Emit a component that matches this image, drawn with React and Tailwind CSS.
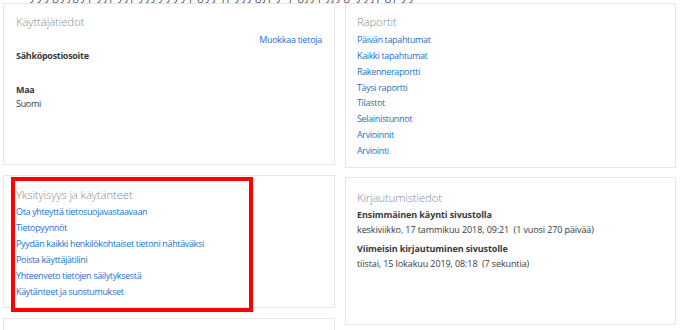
import React from "react";

const font = { fontFamily: '"Open Sans", "Noto Sans", sans-serif' };

function Card({ children, className = "" }) {
  return (
    <div className={"relative border border-[#e6e6e6] bg-white " + className}>
      {children}
    </div>
  );
}

function Heading({ children }) {
  return (
    <div className="text-[11.3px] leading-[16px] text-[#8a8a8a] font-light tracking-[-0.1px]">{children}</div>
  );
}

function A({ children }) {
  return <div className="text-[#1a73c9] tracking-[-0.35px]">{children}</div>;
}

export default function App() {
  const reports = [
    "Päivän tapahtumat",
    "Kaikki tapahtumat",
    "Rakenneraportti",
    "Täysi raportti",
    "Tilastot",
    "Selainistunnot",
    "Arvioinnit",
    "Arviointi",
  ];
  const privacy = [
    "Ota yhteyttä tietosuojavastaavaan",
    "Tietopyynnöt",
    "Pyydän kaikki henkilökohtaiset tietoni nähtäväksi",
    "Poista käyttäjätilini",
    "Yhteenveto tietojen säilytyksestä",
    "Käytänteet ja suostumukset",
  ];
  return (
    <div className="w-[688px] h-[330px] overflow-hidden bg-white text-[9px] tracking-[-0.3px] text-[#373a3c]" style={font}>
      <div className="h-[3px] overflow-hidden pl-[30px]">
        <div className="-mt-[10px] leading-[12px] text-[11px] text-[#555] whitespace-nowrap tracking-[2px]">
          yyygyjgypyjpyjpyjyyyyypgyjqpyjygjpy pgjypjjyg yyjpgpyy
        </div>
      </div>
      <div className="flex pl-[3px] gap-[10px]">
        <div className="w-[332px] flex flex-col gap-[10px]">
          <Card className="h-[162px] pt-[10px] px-[12px]">
            <Heading>Käyttäjätiedot</Heading>
            <div className="mt-[2px] leading-[16px] text-right">
              <span className="text-[#1a73c9]">Muokkaa tietoja</span>
            </div>
            <div className="leading-[16px] font-bold">Sähköpostiosoite</div>
            <div className="mt-[18px] leading-[16px] font-bold">Maa</div>
            <div className="-mt-[2px] leading-[16px]">Suomi</div>
          </Card>
          <Card className="h-[133px] pt-[11px] px-[12px]">
            <Heading>Yksityisyys ja käytänteet</Heading>
            <div className="mt-[1px] leading-[16px]">
              {privacy.map((p) => (
                <A key={p}>{p}</A>
              ))}
            </div>
            <div className="absolute left-[7px] top-[1px] w-[242px] h-[135px] border-[4px] border-[#ff0000]" />
          </Card>
          <Card className="h-[60px]" />
        </div>
        <div className="w-[331px] flex flex-col gap-[9px]">
          <Card className="h-[165px] pt-[10px] px-[11px]">
            <Heading>Raportit</Heading>
            <div className="mt-[2px] leading-[15.85px]">
              {reports.map((r) => (
                <A key={r}>{r}</A>
              ))}
            </div>
          </Card>
          <Card className="h-[148px] pt-[12px] px-[11px]">
            <Heading>Kirjautumistiedot</Heading>
            <div className="mt-[1px] leading-[15px] tracking-[-0.1px]">
              <div className="font-bold">Ensimmäinen käynti sivustolla</div>
              <div className="whitespace-pre">keskiviikko, 17 tammikuu 2018, 09:21  (1 vuosi 270 päivää)</div>
              <div className="mt-[4px] font-bold">Viimeisin kirjautuminen sivustolle</div>
              <div className="whitespace-pre">tiistai, 15 lokakuu 2019, 08:18  (7 sekuntia)</div>
            </div>
          </Card>
        </div>
      </div>
    </div>
  );
}
